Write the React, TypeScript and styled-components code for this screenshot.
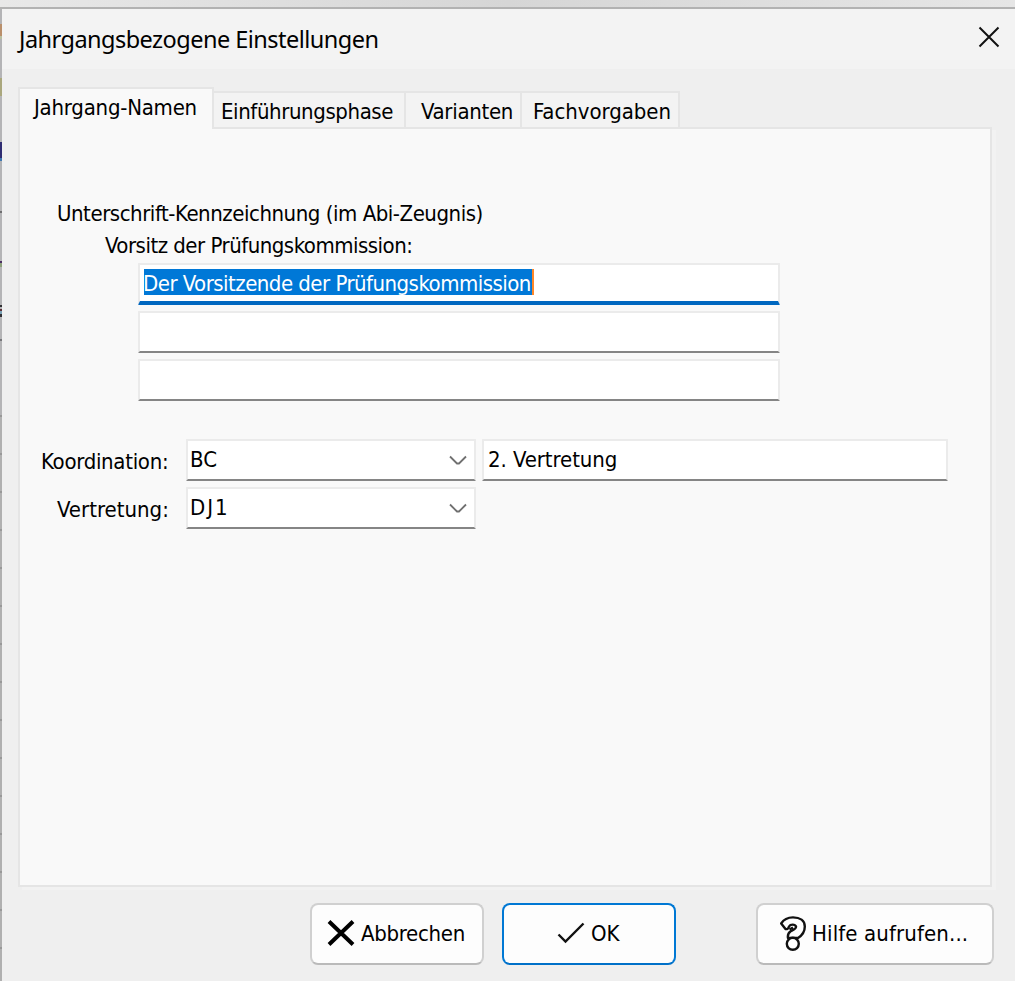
import React from 'react';
import styled, { createGlobalStyle } from 'styled-components';

const Global = createGlobalStyle`
  *, *::before, *::after { box-sizing: border-box; }
  body { margin: 0; background: #efefef; }
`;

const Desktop = styled.div`
  width: 1015px;
  height: 981px;
  overflow: hidden;
  padding: 7px 0 0 2px;
  background:
    linear-gradient(#b2b2b2, #b2b2b2) 0 7px / 1015px 2px no-repeat,
    linear-gradient(90deg, #e8e8e8, #d6d6d6 50%, #e6e6e6) 0 0 / 1015px 7px no-repeat,
    repeating-linear-gradient(#989898 0 2px, #b0b0b0 2px 38px) 0 415px / 2px 566px no-repeat,
    linear-gradient(#b4b4b6 0 16px, #b98f6b 16px 28px, #b9bfa0 28px 31px, #b4b4b6 31px 70px,
      #aaa77d 70px 88px, #b4b4b6 88px 134px, #2f2c72 134px 150px, #3f78b0 150px 153px,
      #b4b4b6 153px 203px, #6e6e70 203px 205px, #b4b4b6 205px 253px, #4a2d62 253px 255px,
      #8da07c 255px 259px, #b4b4b6 259px 297px, #303034 297px 299px, #b4b4b6 299px 301px,
      #5c3038 301px 303px, #78a0b4 303px 306px, #303034 306px 309px, #b4b4b6 309px 331px,
      #77777a 331px 333px, #b4b4b6 333px) 0 8px / 2px 973px no-repeat;
  font: 22px/26px "DejaVu Sans Condensed", "DejaVu Sans", sans-serif;
  font-stretch: condensed;
  color: #000;
`;

const Dialog = styled.section`
  height: 974px;
  border-top: 2px solid #b2b2b2;
  background: #efefef;
`;

const TitleBar = styled.header`
  height: 60px;
  padding: 17px 15px 0 17px;
  display: flex;
  justify-content: space-between;
  background: #f3f3f3;
`;

const Title = styled.h1`
  margin: -1px 0 0;
  font: 400 23.5px/28px "Noto Sans", sans-serif;
  letter-spacing: -0.53px;
  white-space: nowrap;
`;

const CloseButton = styled.button`
  width: 22px;
  height: 22px;
  padding: 0;
  border: 0;
  background: none;
  svg { display: block; }
`;

const Label = styled.span<{ $spacing?: number }>`
  letter-spacing: ${p => p.$spacing ?? 0}px;
  white-space: nowrap;
`;

const TabStrip = styled.nav`
  display: flex;
  align-items: flex-end;
  height: 58px;
  padding: 18px 0 0 16px;
`;

const Tab = styled.div<{ $width: number; $indent: number }>`
  width: ${p => p.$width}px;
  height: 36px;
  padding: 6px 0 0 ${p => p.$indent}px;
  border: solid #e5e5e5;
  border-width: 2px 2px 0 0;
  background: #f3f3f3;
`;

const ActiveTab = styled(Tab)`
  height: 42px;
  margin-bottom: -2px;
  border-left-width: 2px;
  background: #f9f9f9;
  position: relative;
`;

const Panel = styled.main`
  width: 974px;
  height: 760px;
  margin-left: 16px;
  padding: 72px 0 0 19px;
  border: 2px solid #e5e5e5;
  background: #f9f9f9;
  box-shadow: 4px 3px 0 #f2f2f2;
`;

const Caption = styled.div<{ $indent: number; $height: number }>`
  height: ${p => p.$height}px;
  padding-left: ${p => p.$indent}px;
`;

const Fields = styled.div`
  display: grid;
  gap: 6px;
  width: 642px;
  margin-left: 99px;
`;

const Field = styled.div<{ $width: number; $indent?: number }>`
  display: flex;
  justify-content: space-between;
  width: ${p => p.$width}px;
  height: 42px;
  padding: 6px 7px 0 ${p => p.$indent ?? 3}px;
  border: 2px solid #ebebeb;
  border-bottom-color: #858585;
  border-radius: 1px;
  background: #fff;
`;

const FocusedField = styled(Field)`
  justify-content: flex-start;
  padding: 4px 0 0 4px;
  border-bottom: 4px solid #0067c0;
`;

const Selection = styled.span<{ $spacing: number }>`
  height: 26px;
  width: 390px;
  border-right: 2px solid #ff8728;
  background: #0078d7;
  color: #fff;
  line-height: 29px;
  text-indent: -1px;
  letter-spacing: ${p => p.$spacing}px;
  white-space: nowrap;
`;

const People = styled.div`
  display: grid;
  gap: 6px;
  margin-top: 38px;
`;

const PersonRow = styled.div`
  display: flex;
  gap: 6px;
`;

const PersonLabel = styled.div<{ $indent: number }>`
  width: 141px;
  padding: 10px 0 0 ${p => p.$indent}px;
`;

const Arrow = styled.svg`
  margin-top: 8px;
`;

const Footer = styled.footer`
  display: flex;
  margin: 16px 0 0 308px;
`;

const Button = styled.button<{ $width: number; $left?: number; $indent: number; $primary?: boolean }>`
  display: flex;
  align-items: center;
  gap: 6px;
  width: ${p => p.$width}px;
  height: 62px;
  margin-left: ${p => p.$left ?? 0}px;
  padding: 0 0 0 ${p => p.$indent}px;
  border: 2px solid ${p => (p.$primary ? '#0078d4' : '#d0d0d0')};
  border-bottom-color: ${p => (p.$primary ? '#0070c8' : '#bababa')};
  border-radius: 8px;
  background: #fdfdfd;
  color: #000;
  font: inherit;
  svg { flex: none; margin-bottom: 2px; }
`;

const Chevron = () => (
  <Arrow width="18" height="12" viewBox="0 0 18 12" fill="none" stroke="#707070" strokeWidth="1.8">
    <path d="M1 1.5 8 8.5H10L17 1.5" />
  </Arrow>
);

export default function App() {
  return (
    <>
      <Global />
      <Desktop>
        <Dialog>
          <TitleBar>
            <Title>Jahrgangsbezogene Einstellungen</Title>
            <CloseButton aria-label="Schließen">
              <svg width="22" height="22" viewBox="0 0 22 22" stroke="#111" strokeWidth="2">
                <path d="M1.5 1.5 20.5 20.5M20.5 1.5 1.5 20.5" />
              </svg>
            </CloseButton>
          </TitleBar>
          <TabStrip>
            <ActiveTab $width={196} $indent={14}><Label $spacing={-0.23}>Jahrgang-Namen</Label></ActiveTab>
            <Tab $width={192} $indent={7}><Label $spacing={-0.4}>Einführungsphase</Label></Tab>
            <Tab $width={116} $indent={15}><Label $spacing={-0.3}>Varianten</Label></Tab>
            <Tab $width={158} $indent={11}><Label $spacing={-0.05}>Fachvorgaben</Label></Tab>
          </TabStrip>
          <Panel>
            <Caption $indent={18} $height={32}><Label $spacing={-0.46}>Unterschrift-Kennzeichnung (im Abi-Zeugnis)</Label></Caption>
            <Caption $indent={66} $height={30}><Label $spacing={-0.5}>Vorsitz der Prüfungskommission:</Label></Caption>
            <Fields>
              <FocusedField $width={642}>
                <Selection $spacing={-0.52}>Der Vorsitzende der Prüfungskommission</Selection>
              </FocusedField>
              <Field $width={642} />
              <Field $width={642} />
            </Fields>
            <People>
              <PersonRow>
                <PersonLabel $indent={2}><Label $spacing={-0.3}>Koordination:</Label></PersonLabel>
                <Field $width={290} $indent={2}><Label>BC</Label><Chevron /></Field>
                <Field $width={466} $indent={4}><Label $spacing={-0.08}>2. Vertretung</Label></Field>
              </PersonRow>
              <PersonRow>
                <PersonLabel $indent={18}><Label $spacing={0}>Vertretung:</Label></PersonLabel>
                <Field $width={290} $indent={2}><Label $spacing={2}>DJ1</Label><Chevron /></Field>
              </PersonRow>
            </People>
          </Panel>
          <Footer>
            <Button $width={174} $indent={15}>
              <svg width="28" height="26" viewBox="0 0 28 26" stroke="#000" strokeWidth="4">
                <path d="M2 1.5 26 24.500M26 1.5 2 24.500" />
              </svg>
              <Label $spacing={-0.3}>Abbrechen</Label>
            </Button>
            <Button $width={174} $left={18} $indent={53} $primary>
              <svg width="28" height="22" viewBox="0 0 28 22" fill="none" stroke="#111" strokeWidth="2.4">
                <path d="M1.5 12.5 8.5 19.5 26.5 1.5" />
              </svg>
              <Label>OK</Label>
            </Button>
            <Button $width={238} $left={80} $indent={22}>
              <svg width="26" height="35" viewBox="0 0 26 35" fill="#fff" stroke="#111" strokeWidth="2.4" strokeLinejoin="round">
                <path d="M1.200 7.5C4 3 8 1.4 13 1.4 20 1.4 24.800 4.500 24.800 10.500 24.800 16 22 19.500 18 22H8C7.500 19 8.500 16.500 11 15 14 13.500 16.500 12.500 16 10.500 15 8 10.500 8 9 10.500 8.500 12.500 7 13.500 5.500 13Z" />
                <path d="M9.500 13.500 13 11.500" />
                <circle cx="12.800" cy="27.800" r="6" />
              </svg>
              <Label $spacing={0.12}>Hilfe aufrufen...</Label>
            </Button>
          </Footer>
        </Dialog>
      </Desktop>
    </>
  );
}
